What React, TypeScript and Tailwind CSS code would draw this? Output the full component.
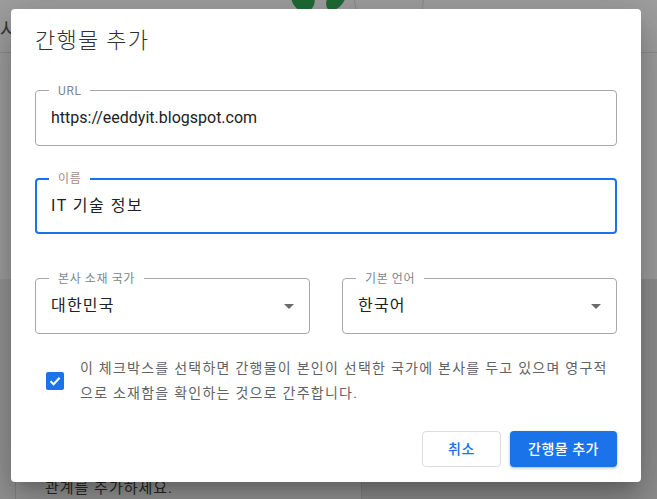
import { ReactNode } from 'react';

function OutlinedField({
  label,
  focused = false,
  children,
}: {
  label: string;
  focused?: boolean;
  children: ReactNode;
}) {
  return (
    <div
      className={`relative h-14 rounded-[4px] flex items-center pr-[14px] ${
        focused ? 'border-2 border-[#1a73e8] pl-[14px]' : 'border border-[#a8a8a8] pl-[15px]'
      }`}
    >
      <span
        className={`absolute px-[9px] bg-white text-xs leading-none tracking-[0.6px] ${
          focused ? '-top-[7px] left-[12px] text-[#a08a84]' : '-top-[6px] left-[13px] text-[#80868b]'
        }`}
      >
        {label}
      </span>
      {children}
    </div>
  );
}

function SelectField({ label, value }: { label: string; value: string }) {
  return (
    <OutlinedField label={label}>
      <span className="flex-1 text-base tracking-[1.2px] text-[#202124]">{value}</span>
      <svg width="10" height="5" viewBox="0 0 10 5" className="mr-[1px]">
        <path d="M0 0 L10 0 L5 5 Z" fill="#6b6b6b" />
      </svg>
    </OutlinedField>
  );
}

export default function App() {
  return (
    <div className="relative h-[499px] w-full overflow-hidden font-[Roboto,'Noto_Sans_CJK_KR',sans-serif]">
      {/* page behind the scrim */}
      <div className="h-full flex flex-col bg-[#9f9f9f]">
        <div className="h-[54px] border-b border-[#8e8e8e] flex items-start">
          <span className="text-xl text-[#3a3a3a] mt-[16px]">사</span>
          <div className="ml-[274px] -mt-[14px] flex gap-[14px]">
            <div className="w-[22px] h-[26px] bg-[#1e6b34] rounded-[50%] -rotate-[35deg]" />
            <div className="w-[16px] h-[26px] bg-[#1e6b34] rounded-[50%] rotate-[35deg]" />
          </div>
          <div className="w-[70px] h-[70px] rounded-full border border-[#8a8a8a] -mt-[36px] ml-[10px]" />
        </div>
        <div className="h-[228px]" />
        <div className="flex-1 flex bg-[#959595]">
          <div className="w-[15px]" />
          <div className="w-[347px] border-l border-r border-[#858585] bg-[#999999] pt-[198px] pl-[29px] text-[15px] tracking-[1px] text-[#2a2a2a]">
            관계를 추가하세요.
          </div>
          <div className="flex-1 bg-[#8f8f8f]" />
        </div>
      </div>

      {/* dialog */}
      <div className="absolute left-[11px] top-[9px] w-[630px] h-[473px] bg-white rounded-[4px] shadow-[0_11px_15px_-7px_rgba(0,0,0,0.2),0_24px_38px_3px_rgba(0,0,0,0.14),0_9px_46px_8px_rgba(0,0,0,0.12)] px-6 pt-4 flex flex-col">
        <h2 className="h-8 leading-8 text-[22px] font-light tracking-[1.3px] text-[#303134]">간행물 추가</h2>

        <div className="mt-[33px]">
          <OutlinedField label="URL">
            <span className="text-base text-[#202124]">https://eeddyit.blogspot.com</span>
          </OutlinedField>
        </div>

        <div className="mt-8">
          <OutlinedField label="이름" focused>
            <span className="text-base tracking-[1.5px] text-[#202124]">IT 기술 정보</span>
          </OutlinedField>
        </div>

        <div className="mt-[44px] grid grid-cols-2 gap-8">
          <SelectField label="본사 소재 국가" value="대한민국" />
          <SelectField label="기본 언어" value="한국어" />
        </div>

        <div className="mt-[22px] flex items-center pl-[11px] gap-4">
          <div className="w-[18px] h-[18px] rounded-[2px] bg-[#1a73e8] flex items-center justify-center shrink-0">
            <svg width="14" height="14" viewBox="0 0 14 14">
              <path d="M2.5 7.2 L5.6 10.2 L11.6 3.8" fill="none" stroke="white" strokeWidth="2" />
            </svg>
          </div>
          <p className="text-sm leading-[25px] tracking-[1.25px] text-[#5f6368]">
            이 체크박스를 선택하면 간행물이 본인이 선택한 국가에 본사를 두고 있으며 영구적
            <br />
            으로 소재함을 확인하는 것으로 간주합니다.
          </p>
        </div>

        <div className="mt-[25px] flex justify-end gap-[9px]">
          <button className="h-9 w-[79px] rounded-[4px] border border-[#dadce0] text-sm font-medium tracking-[0.5px] text-[#1a73e8] bg-white">
            취소
          </button>
          <button className="h-9 w-[107px] rounded-[4px] bg-[#1a73e8] text-sm font-medium tracking-[0.5px] text-white shadow-[0_1px_3px_rgba(0,0,0,0.3)]">
            간행물 추가
          </button>
        </div>
      </div>
    </div>
  );
}
